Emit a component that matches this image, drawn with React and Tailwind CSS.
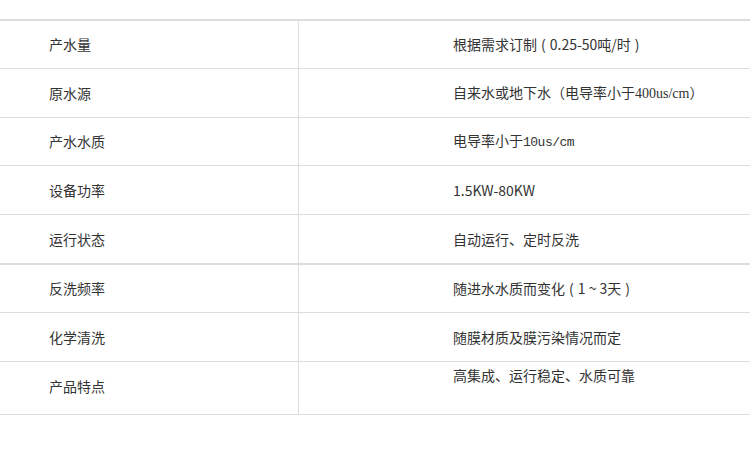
const Paren = ({ children }) => (
  <span className="inline-block mx-[4px]">{children}</span>
);

const rows = [
  {
    label: "产水量",
    value: (
      <>
        根据需求订制<Paren>(</Paren>0.25-50吨/时<Paren>)</Paren>
      </>
    ),
    h: "h-[48px]",
  },
  {
    label: "原水源",
    value: (
      <>
        自来水或地下水（电导率小于
        <span className="font-['Liberation_Serif',serif]">400us/cm</span>）
      </>
    ),
    h: "h-[49px]",
  },
  {
    label: "产水水质",
    value: (
      <>
        电导率小于
        <span className="font-['Liberation_Mono',monospace] text-[13px] tracking-[-0.5px]">10us/cm</span>
      </>
    ),
    h: "h-[48px]",
  },
  { label: "设备功率", value: <>1.5KW-80KW</>, h: "h-[49px]" },
  { label: "运行状态", value: <>自动运行、定时反洗</>, h: "h-[50px]", thick: true },
  {
    label: "反洗频率",
    value: (
      <>
        随进水水质而变化<Paren>(</Paren>1 ~ 3天<Paren>)</Paren>
      </>
    ),
    h: "h-[48px]",
  },
  { label: "化学清洗", value: <>随膜材质及膜污染情况而定</>, h: "h-[49px]" },
  { label: "产品特点", value: <>高集成、运行稳定、水质可靠</>, h: "h-[53px]", top: true },
];

export default function App() {
  return (
    <div className="w-[750px] h-[458px] bg-white overflow-hidden font-['Noto_Sans_CJK_SC','Noto_Sans',sans-serif] text-[14px] text-[#333]">
      <div className="mt-[19px] border-t-2 border-[#dddddd]">
        {rows.map((r) => (
          <div
            key={r.label}
            className={`flex ${r.h} ${r.thick ? "border-b-2" : "border-b"} border-[#dddddd]`}
          >
            <div
              className={`w-[299px] shrink-0 border-r border-[#dddddd] flex items-center pl-[49px] ${r.top ? "pb-[3px]" : ""}`}
            >
              {r.label}
            </div>
            <div
              className={`flex-1 flex pl-[154px] ${r.top ? "items-start pt-[3px]" : "items-center"}`}
            >
              <span>{r.value}</span>
            </div>
          </div>
        ))}
      </div>
    </div>
  );
}
